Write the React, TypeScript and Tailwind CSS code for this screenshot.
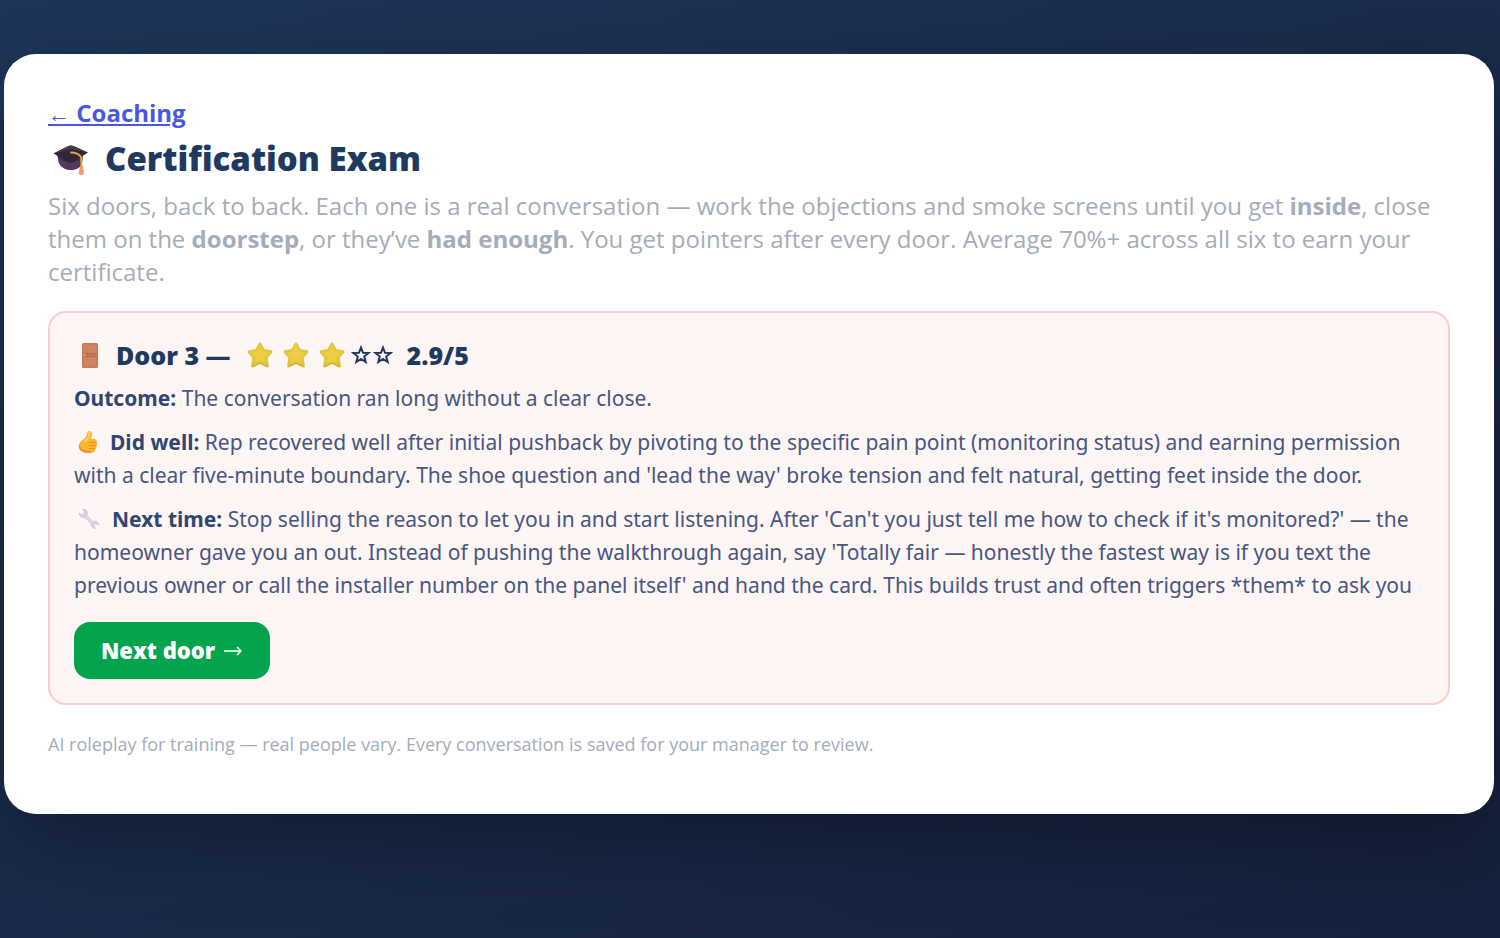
import React from 'react';

const GraduationCap = () => (
  <svg viewBox="0 0 36 32" className="h-8 w-9 shrink-0" aria-hidden="true">
    <path d="M4 11L6 20Q9 26 17 27Q25 27 29 21.500L30 11Z" fill="#43304f" />
    <path d="M5 15Q16 24 29 16L28 22Q24 27 17 27Q9 26 6 20Z" fill="#54395f" />
    <path d="M0.500 10.500L15.500 3Q18 2 20.500 3L35 9.500L20 19Q17.500 20.500 15 19Z" fill="#2f2638" />
    <path d="M0.500 10.500L15.500 3Q18 2 20.500 3L35 9.500L18 6Z" fill="#493c50" />
    <path d="M18 9.500Q25 9.500 28 14L28.500 24" fill="none" stroke="#e3a63d" strokeWidth="1.800" strokeLinecap="round" />
    <path d="M27 23Q28.500 21.500 30 23L31 31Q28.500 33 25.500 31Z" fill="#f29a68" />
  </svg>
);

const DoorIcon = () => (
  <svg viewBox="0 0 16 25" className="h-[25px] w-4 shrink-0" aria-hidden="true">
    <rect x="0" y="0" width="16" height="25" rx="1.500" fill="#c97b5b" />
    <rect x="2" y="2" width="12" height="8" rx="1" fill="#d0835f" />
    <rect x="2" y="14" width="12" height="9" rx="1" fill="#d08262" />
    <path d="M1 11H15M3 13.500H13" stroke="#b0664b" strokeWidth="1" />
    <circle cx="2.500" cy="12" r="1" fill="#e9b46a" />
  </svg>
);

const Star = () => (
  <svg viewBox="0 0 26 26" className="h-[26px] w-[26px] shrink-0" aria-hidden="true">
    <path
      d="M13 2L16.500 8.500L24 9.800L19 15.600L20.400 24L13 20.500L5.600 24L7 15.600L2 9.800L9.500 8.500Z"
      fill="#e3c53b"
      stroke="#e3c53b"
      strokeWidth="3"
      strokeLinejoin="round"
    />
    <path d="M13 3L16 9L23 10.500L18 15L18.500 21L13 18.500L7.500 21L8 15L3 10.500L10 9Z" fill="#ebcf43" />
    <path d="M5.500 24.500L13 21L20.500 24.500" fill="none" stroke="#d6a83b" strokeWidth="1.200" strokeLinecap="round" />
  </svg>
);

const EmptyStar = () => (
  <svg viewBox="0 0 20 20" className="h-5 w-5 shrink-0" aria-hidden="true">
    <path
      d="M10 2.500L12 7.800L17.600 8L13.200 11.500L14.700 17L10 13.900L5.300 17L6.800 11.500L2.400 8L8 7.800Z"
      fill="none"
      stroke="#1e3a5f"
      strokeWidth="2"
    />
  </svg>
);

const ThumbsUp = () => (
  <svg viewBox="0 0 20 24" className="inline-block h-6 w-5 align-[-4px]" aria-hidden="true">
    <path
      d="M11 1Q14.500 1 14 5L13 9H17Q19.500 10 18.500 12Q20 13.500 18.500 15.500Q19 17.500 17.500 18.500Q18 21 15.500 22Q10 24 5 22Q0 20 1 14Q2 11 6 9Q9 6 9.500 2Q10 1 11 1Z"
      fill="#fbb52f"
    />
    <path d="M1 14Q3 20 9 20.500L15.500 22Q10 24 5 22Q0 20 1 14Z" fill="#ed8f3d" />
    <path d="M11 12.500H18M11 15.500H18M11 18.500H17" stroke="#e98f31" strokeWidth="1" strokeLinecap="round" />
    <path d="M11.500 2L11 7L7 11" fill="none" stroke="#ffd25a" strokeWidth="2" strokeLinecap="round" />
  </svg>
);

const Wrench = () => (
  <svg viewBox="0 0 22 22" className="inline-block h-[22px] w-[22px] align-[-3px]" aria-hidden="true">
    <path
      d="M5 1Q9 1 9.500 5L9 7.500L15 13.500Q20 12.500 21 17L18 15.500L16 17.500L17.500 20.500Q13 20 13 15.500L7 9.500Q1.500 10 1 5L4 7L6.500 4.500Z"
      fill="#d9cde3"
      stroke="#cabbd8"
      strokeWidth="0.600"
      strokeLinejoin="round"
    />
    <path d="M8 8L14.500 14.500" stroke="#eee6f3" strokeWidth="1" />
  </svg>
);

const ArrowRight = () => (
  <svg viewBox="0 0 20 12" className="h-3 w-5 shrink-0" fill="none" stroke="currentColor" strokeWidth="1.500" aria-hidden="true">
    <path d="M1 6H18M14 2L18 6L14 10" />
  </svg>
);

const App = () => {
  return (
    <div className="min-h-screen overflow-hidden bg-[linear-gradient(150deg,#1e3558_0%,#15203c_100%)] pt-[54px] pr-[6px] pb-10 pl-1 font-['Open_Sans','Noto_Sans',sans-serif]">
      <main className="rounded-[32px] bg-white px-11 pt-10 pb-[55px] shadow-[0_30px_80px_rgba(0,0,0,0.3)]">
        <div className="h-[38px] text-[24px] leading-[38px] font-bold">
          <a href="#coaching" className="text-[#4759e4] underline decoration-2 underline-offset-2">
            <span className="font-['Liberation_Sans',sans-serif] text-[22px] font-normal">←</span> Coaching
          </a>
        </div>

        <h1 className="flex h-[54px] items-center gap-4 pl-[5px] text-[33px] font-extrabold text-[#1e3a5f]">
          <GraduationCap />
          Certification Exam
        </h1>

        <p className="mt-[3px] mb-[23px] text-[24px] leading-[33px] text-[#a3adbb]">
          Six doors, back to back. Each one is a real conversation — work the objections and smoke screens until you
          get <b>inside</b>, close them on the <b>doorstep</b>, or they’ve <b>had enough</b>. You get pointers after
          every door. Average 70%+ across all six to earn your certificate.
        </p>

        <section className="rounded-[18px] border-2 border-[#f8cfd0] bg-[#fef5f5] px-6 pt-[22px] pb-6 text-[21px] leading-[33px] text-[#475781]">
          <h2 className="flex h-10 items-center pl-2 text-[25px] font-extrabold text-[#1e3a5f]">
            <DoorIcon />
            <span className="ml-[18px]">Door 3 —</span>
            <span className="ml-4 flex items-center gap-[10px]" role="img" aria-label="3 out of 5 stars">
              <Star />
              <Star />
              <Star />
            </span>
            <span className="ml-[6px] flex items-center gap-[2px]">
              <EmptyStar />
              <EmptyStar />
            </span>
            <span className="ml-[14px]">2.9/5</span>
          </h2>

          <div className="mt-[7px] flex flex-col gap-[11px] font-['Noto_Sans','Open_Sans',sans-serif]">
            <p>
              <b className="text-[#2f4672]">Outcome:</b> The conversation ran long without a clear close.
            </p>

            <p>
              <span className="mr-3 pl-1"><ThumbsUp /></span>
              <b className="text-[#2f4672]">Did well:</b> Rep recovered well after initial pushback by pivoting to the
              specific pain point (monitoring status) and earning permission with a clear five-minute boundary. The
              shoe question and 'lead the way' broke tension and felt natural, getting feet inside the door.
            </p>

            <p>
              <span className="mr-3 pl-1"><Wrench /></span>
              <b className="text-[#2f4672]">Next time:</b> Stop selling the reason to let you in and start listening.
              After 'Can't you just tell me how to check if it's monitored?' — the homeowner gave you an out. Instead
              of pushing the walkthrough again, say 'Totally fair — honestly the fastest way is if you text the
              previous owner or call the installer number on the panel itself' and hand the card. This builds trust
              and often triggers *them* to ask you
            </p>
          </div>

          <button type="button" className="mt-5 flex h-[57px] items-center gap-2 rounded-[16px] bg-[#04a44f] px-[27px] text-[22px] font-extrabold text-white">
            Next door
            <ArrowRight />
          </button>
        </section>

        <p className="mt-6 text-[18px] leading-[30px] text-[#a3adbb]">
          AI roleplay for training — real people vary. Every conversation is saved for your manager to review.
        </p>
      </main>
    </div>
  );
};

export default App;
